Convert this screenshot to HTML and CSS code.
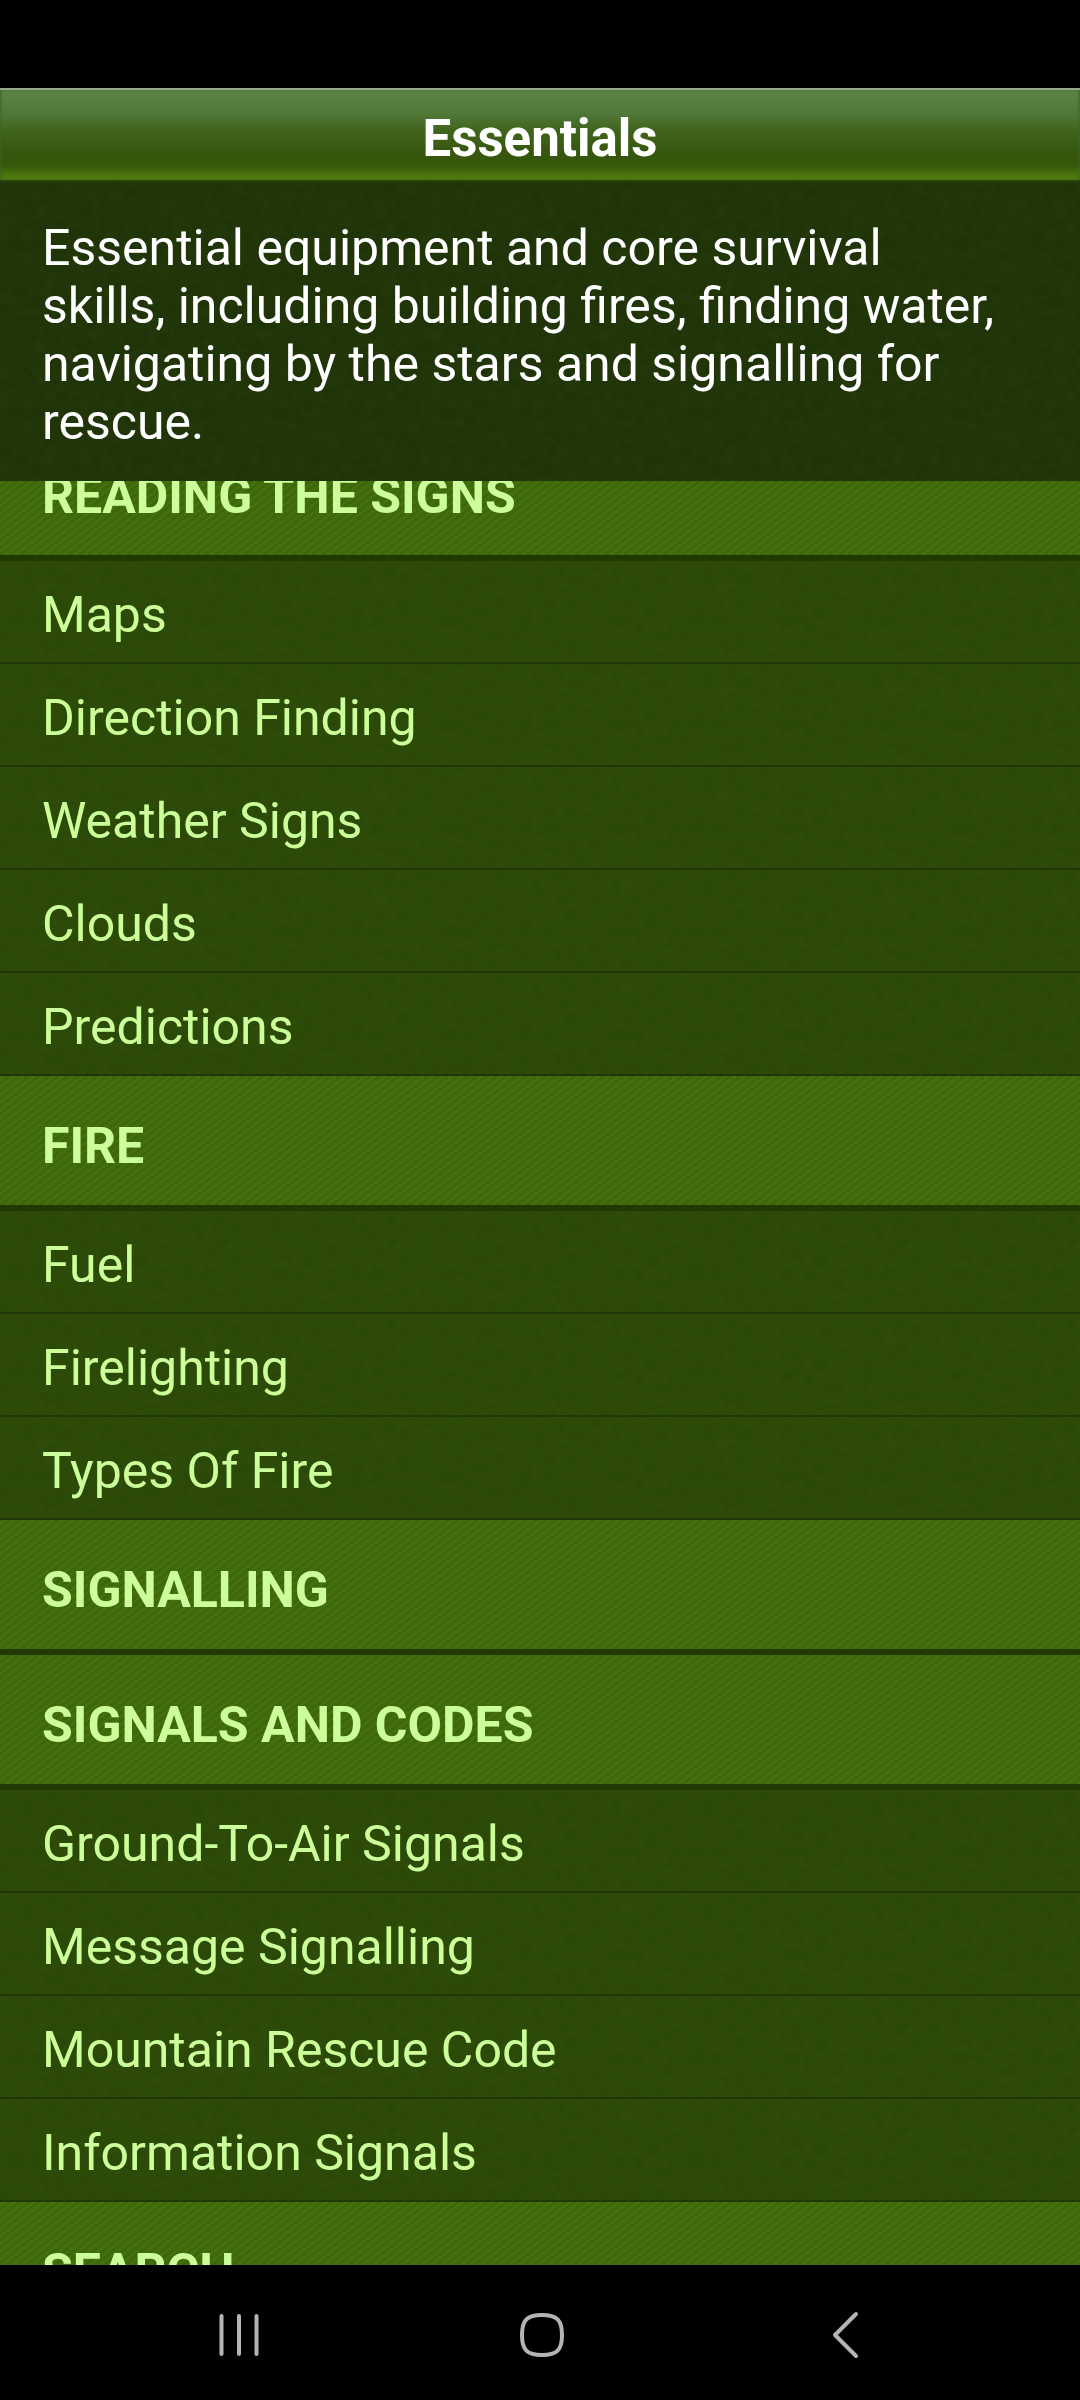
FILE: index.html
```
<!DOCTYPE html>
<html lang="en">
<head>
    <meta charset="UTF-8">
    <meta name="viewport" content="width=device-width, initial-scale=1.0">
    <title>Essentials</title>
    <link rel="stylesheet" href="styles.css">
</head>
<body>
    <div class="status-bar"></div>

    <!-- Title Bar -->
    <header class="title-bar">
        <h1>Essentials</h1>
    </header>

    <p class="intro">Essential equipment and core survival skills, including building fires, finding water, navigating by the stars and signalling for rescue.</p>

    <!-- Topic List -->
    <main class="topics">
        <h2 class="section scrolled">READING THE SIGNS</h2>
        <a class="topic" href="#maps">Maps</a>
        <a class="topic" href="#direction-finding">Direction Finding</a>
        <a class="topic" href="#weather-signs">Weather Signs</a>
        <a class="topic" href="#clouds">Clouds</a>
        <a class="topic" href="#predictions">Predictions</a>

        <h2 class="section">FIRE</h2>
        <a class="topic" href="#fuel">Fuel</a>
        <a class="topic" href="#firelighting">Firelighting</a>
        <a class="topic" href="#types-of-fire">Types Of Fire</a>

        <h2 class="section">SIGNALLING</h2>

        <h2 class="section">SIGNALS AND CODES</h2>
        <a class="topic" href="#ground-to-air">Ground-To-Air Signals</a>
        <a class="topic" href="#message-signalling">Message Signalling</a>
        <a class="topic" href="#mountain-rescue">Mountain Rescue Code</a>
        <a class="topic" href="#information-signals">Information Signals</a>

        <h2 class="section">SEARCH</h2>
    </main>

    <!-- System Navigation -->
    <nav class="system-nav">
        <button type="button" aria-label="Recent apps">
            <svg width="48" height="48" viewBox="0 0 48 48">
                <path d="M6.500 5v38M24 5v38M41.500 5v38"/>
            </svg>
        </button>
        <button type="button" aria-label="Home">
            <svg width="48" height="48" viewBox="0 0 48 48">
                <path d="M24 4C39 4 44 9 44 24S39 44 24 44 4 39 4 24 9 4 24 4Z"/>
            </svg>
        </button>
        <button type="button" aria-label="Back">
            <svg width="48" height="48" viewBox="0 0 48 48">
                <path d="M35 3L14 24L35 45"/>
            </svg>
        </button>
    </nav>
</body>
</html>
```
FILE: styles.css
```
/* General Styles */
* {
    box-sizing: border-box;
}

body {
    margin: 0;
    height: 100vh;
    display: flex;
    flex-direction: column;
    background-color: #000;
    font-family: Roboto, sans-serif;
    font-size: 50px;
    line-height: 58px;
}

.status-bar {
    flex: none;
    height: 88px;
}

/* Title Bar */
.title-bar {
    flex: none;
    padding: 20px 42px 12px;
    background: linear-gradient(#5b8444, #51793a 25%, #41641d 45%, #36560e 70%, #37570a 84%, #4f7a0d 97%);
    border-top: 2px solid #94a988;
    border-bottom: 2px solid #294509;
    box-shadow: inset 2px 0 3px -1px #3f6526, inset -2px 0 3px -1px #3f6526;
    color: #fff;
    text-align: center;
}

.title-bar h1 {
    margin: 0;
    font-size: 51px;
}

.intro {
    flex: none;
    margin: 0;
    padding: 37px 76px 30px 42px;
    background-color: #1e3307;
    color: #fff;
}

/* Faint leafy mottling */
.intro,
.topic {
    background-image: url("data:image/svg+xml,%3Csvg xmlns='http://www.w3.org/2000/svg' width='170' height='170'%3E%3Cfilter id='n'%3E%3CfeTurbulence type='fractalNoise' baseFrequency='.09' numOctaves='3' stitchTiles='stitch'/%3E%3CfeColorMatrix values='0 0 0 0 .35 0 0 0 0 .4 0 0 0 0 .1 .5 0 0 0 -.15'/%3E%3C/filter%3E%3Crect width='170' height='170' filter='url(%23n)' opacity='.15'/%3E%3C/svg%3E");
}

/* Topic List */
.topics {
    flex: 1;
    min-height: 0;
    overflow: hidden;
}

.section {
    margin: 0;
    padding: 41px 42px 30px;
    background: repeating-linear-gradient(142deg, #3b6508 0, #46710f 3px, #3b6508 6px);
    border-bottom: 6px solid #203905;
    color: #cf9;
    font-size: 50px;
}

/* List is scrolled part way through the first heading */
.scrolled {
    margin-top: -55px;
}

.topic {
    display: block;
    padding: 25px 42px 18px;
    background-color: #2a4806;
    border-bottom: 2px solid #1e3808;
    color: #cf9;
    text-decoration: none;
}

/* System Navigation */
.system-nav {
    flex: none;
    display: flex;
    justify-content: space-around;
    padding: 46px 84px 41px 88px;
}

.system-nav button {
    display: flex;
    padding: 0;
    background: none;
    border: none;
    cursor: pointer;
}

.system-nav svg {
    fill: none;
    stroke: #b4b4b4;
    stroke-width: 4;
    stroke-linecap: round;
    stroke-linejoin: round;
}
```
